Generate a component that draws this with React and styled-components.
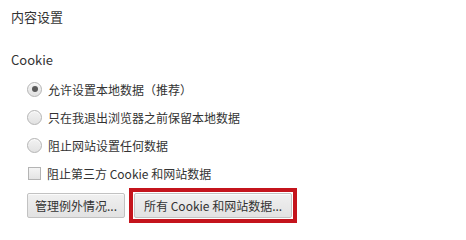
import React from "react";
import styled, { createGlobalStyle } from "styled-components";

const Global = createGlobalStyle`
  html, body { margin: 0; padding: 0; background: #fff; }
  body { font-family: "Microsoft YaHei", "Noto Sans CJK SC", "Noto Sans", sans-serif; color: #333; }
`;

const Page = styled.div`
  padding: 8px 0 0 11px;
  width: 455px;
  height: 226px;
  overflow: hidden;
`;

const Title = styled.div`
  font-size: 13px;
  line-height: 18px;
  height: 18px;
`;

const Section = styled.div`
  margin-top: 25px;
`;

const SectionTitle = styled.div`
  font-size: 13px;
  line-height: 18px;
  height: 18px;
`;

const Options = styled.div`
  margin-top: 6px;
  padding-left: 16px;
  display: flex;
  flex-direction: column;
`;

const Row = styled.label`
  display: flex;
  align-items: center;
  height: 28px;
  font-size: 12px;
  gap: 6px;
`;

const Radio = styled.span`
  width: 13px;
  height: 13px;
  border-radius: 50%;
  border: 1px solid #b4b4b4;
  background: linear-gradient(#f2f2f2, #e2e2e2);
  display: flex;
  align-items: center;
  justify-content: center;
  box-shadow: inset 0 1px 1px rgba(255,255,255,0.8);
  &::after {
    content: "";
    display: ${(p) => (p.$checked ? "block" : "none")};
    width: 6px;
    height: 6px;
    border-radius: 50%;
    background: #5a5a5a;
  }
`;

const Check = styled.span`
  width: 11px;
  height: 11px;
  border: 1px solid #b4b4b4;
  background: linear-gradient(#f4f4f4, #e4e4e4);
  margin-left: 1px;
`;

const Buttons = styled.div`
  margin-top: 1px;
  padding-left: 16px;
  display: flex;
  align-items: center;
  gap: 4px;
`;

const Highlight = styled.span`
  display: flex;
  border: 4px solid #c4141c;
  padding: 1px;
`;

const Button = styled.button`
  font-family: inherit;
  font-size: 12px;
  color: #333;
  height: 25px;
  padding: 0 ${(p) => (p.$pad ? p.$pad : 7)}px;
  border: 1px solid #c2c2c2;
  border-radius: 2px;
  background: linear-gradient(#f0f0f0, #e2e2e2);
  box-shadow: inset 0 1px 0 #fbfbfb;
  white-space: nowrap;
`;

export default function App() {
  return (
    <>
      <Global />
      <Page>
        <Title>内容设置</Title>
        <Section>
          <SectionTitle>Cookie</SectionTitle>
          <Options>
            <Row>
              <Radio $checked />
              允许设置本地数据（推荐）
            </Row>
            <Row>
              <Radio />
              只在我退出浏览器之前保留本地数据
            </Row>
            <Row>
              <Radio />
              阻止网站设置任何数据
            </Row>
            <Row>
              <Check />
              阻止第三方 Cookie 和网站数据
            </Row>
          </Options>
          <Buttons>
            <Button>管理例外情况...</Button>
            <Highlight>
              <Button $pad={9}>所有 Cookie 和网站数据...</Button>
            </Highlight>
          </Buttons>
        </Section>
      </Page>
    </>
  );
}
